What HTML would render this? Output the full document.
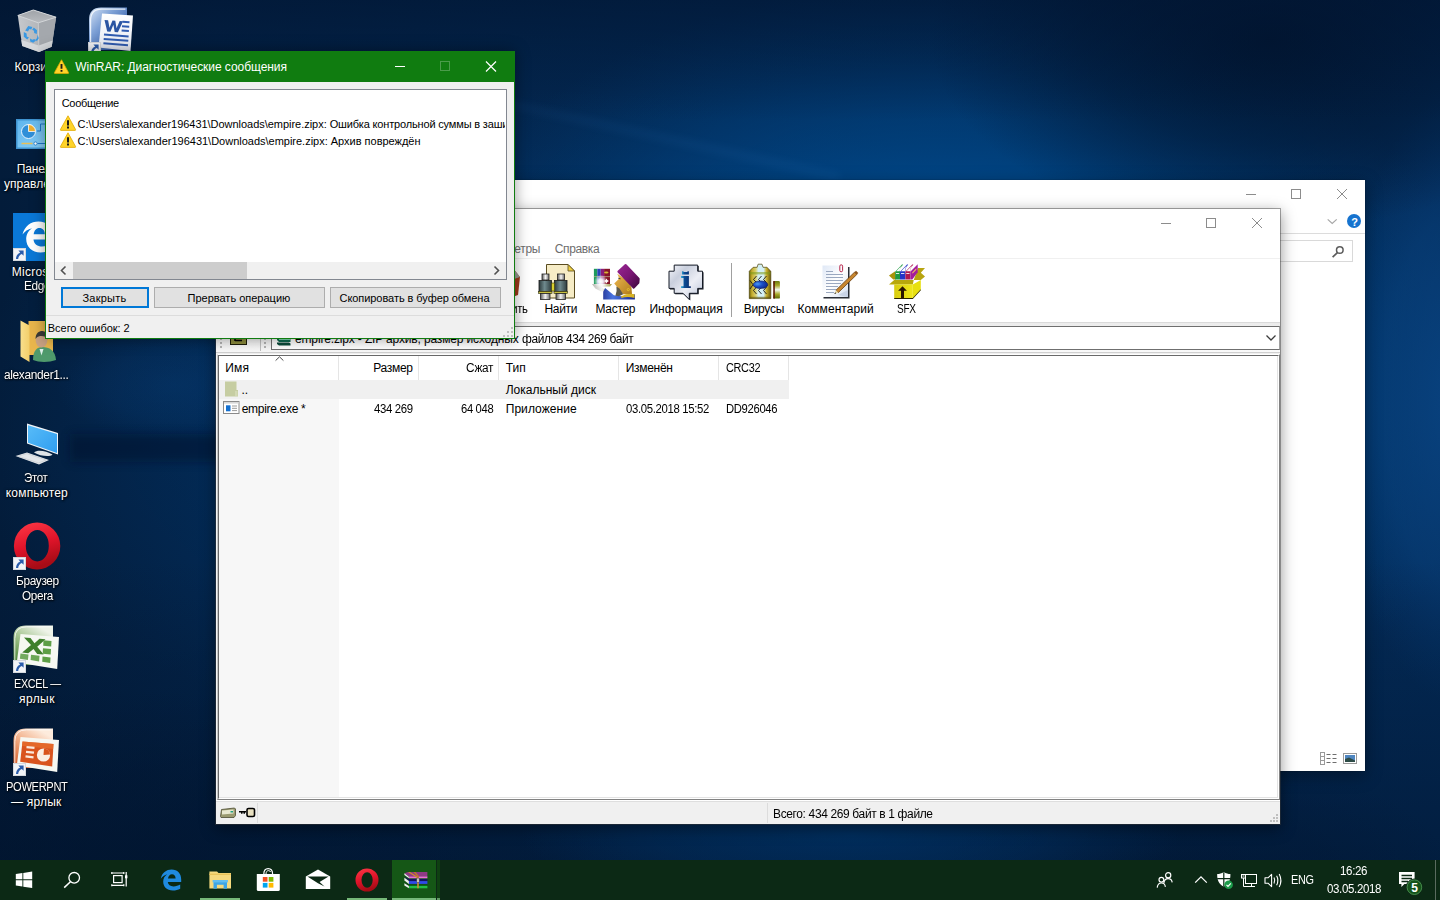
<!DOCTYPE html>
<html lang="ru">
<head>
<meta charset="utf-8">
<title>WinRAR: Диагностические сообщения</title>
<style>
*{box-sizing:border-box;margin:0;padding:0}
html,body{width:1440px;height:900px;overflow:hidden}
body{position:relative;font-family:"Liberation Sans",sans-serif;font-size:12px;color:#000;background:#03224a}
.t{position:absolute;white-space:pre;line-height:16px;height:16px}
svg{position:absolute;overflow:visible}
#wall{overflow:hidden}

</style>
</head>
<body>
<svg id="wall" style="left:0;top:0" width="1440" height="900" viewBox="0 0 1440 900">
<defs>
<linearGradient id="wbase" x1="0" y1="0" x2="1" y2="0">
<stop offset="0" stop-color="#031c3a"/><stop offset=".15" stop-color="#032348"/><stop offset=".5" stop-color="#032852"/><stop offset="1" stop-color="#032a56"/>
</linearGradient>
<radialGradient id="wglow" cx=".5" cy=".5" r=".5">
<stop offset="0" stop-color="#0058a6" stop-opacity="1"/><stop offset=".45" stop-color="#004e94" stop-opacity=".85"/><stop offset=".75" stop-color="#00488a" stop-opacity=".4"/><stop offset="1" stop-color="#00407a" stop-opacity="0"/>
</radialGradient>
<radialGradient id="wglow2" cx=".5" cy=".5" r=".5">
<stop offset="0" stop-color="#0a4686" stop-opacity=".8"/><stop offset=".6" stop-color="#0a4686" stop-opacity=".45"/><stop offset="1" stop-color="#064080" stop-opacity="0"/>
</radialGradient>
<radialGradient id="wglow3" cx=".5" cy=".5" r=".5">
<stop offset="0" stop-color="#003c78" stop-opacity=".5"/><stop offset=".6" stop-color="#003c78" stop-opacity=".25"/><stop offset="1" stop-color="#003c78" stop-opacity="0"/>
</radialGradient>
<radialGradient id="wdark" cx=".5" cy=".5" r=".5">
<stop offset="0" stop-color="#01142e" stop-opacity=".9"/><stop offset=".55" stop-color="#01142e" stop-opacity=".5"/><stop offset="1" stop-color="#01142e" stop-opacity="0"/>
</radialGradient>
<linearGradient id="wtop" x1="0" y1="0" x2="0" y2="1">
<stop offset="0" stop-color="#011430" stop-opacity=".6"/><stop offset="1" stop-color="#011430" stop-opacity="0"/>
</linearGradient>
<linearGradient id="wbot" x1="0" y1="0" x2="0" y2="1">
<stop offset="0" stop-color="#01142e" stop-opacity="0"/><stop offset="1" stop-color="#01142e" stop-opacity=".62"/>
</linearGradient>
<filter id="wblur2" x="-20%" y="-60%" width="140%" height="220%"><feGaussianBlur stdDeviation="5"/></filter>
<filter id="wblur" x="-20%" y="-50%" width="140%" height="200%"><feGaussianBlur stdDeviation="4"/></filter>
</defs>
<rect width="1440" height="900" fill="url(#wbase)"/>
<ellipse cx="560" cy="420" rx="600" ry="330" fill="url(#wglow3)"/>
<ellipse cx="940" cy="390" rx="560" ry="410" fill="url(#wglow)"/>
<ellipse cx="1450" cy="400" rx="110" ry="300" fill="url(#wglow2)"/>
<ellipse cx="1270" cy="40" rx="340" ry="190" fill="url(#wdark)"/>
<rect width="1440" height="120" fill="url(#wtop)"/>
<rect y="560" width="1440" height="340" fill="url(#wbot)"/>
<ellipse cx="120" cy="880" rx="520" ry="190" fill="url(#wdark)" opacity=".75"/>
<ellipse cx="1200" cy="880" rx="260" ry="120" fill="url(#wdark)" opacity=".5"/>
<ellipse cx="850" cy="835" rx="330" ry="70" fill="url(#wglow3)"/>
<ellipse cx="175" cy="385" rx="120" ry="55" fill="url(#wglow2)" opacity=".35"/>
<rect x="70" y="434" width="170" height="28" fill="#010e26" opacity=".42" filter="url(#wblur2)"/>
<path d="M500 100 L840 174 L840 180 L500 104Z" fill="#3a88d0" opacity=".13" filter="url(#wblur)"/>
</svg>
<svg style="left:13px;top:6px" width="48" height="48" viewBox="0 0 48 48">
<defs><linearGradient id="rb1" x1="0" y1="0" x2="1" y2="0"><stop offset="0" stop-color="#c6c9cd"/><stop offset=".55" stop-color="#b3b6ba"/><stop offset="1" stop-color="#a6a9ae"/></linearGradient>
<linearGradient id="rb2" x1="0" y1="0" x2="0" y2="1"><stop offset="0" stop-color="#9fa3a8"/><stop offset="1" stop-color="#b8bbbf"/></linearGradient></defs>
<path d="M4.800 9.500 L20.300 4 L43.100 11.200 L38.700 40.700 L25.900 46 L9.200 40.100 Z" fill="url(#rb1)"/>
<path d="M25.300 16.800 L43.100 11.200 L38.700 40.700 L25.900 46Z" fill="#a4a8ad"/>
<path d="M4.800 9.500 L20.300 4 L43.100 11.200 L25.300 16.800 Z" fill="url(#rb2)" stroke="#d2d5d8" stroke-width="1" stroke-linejoin="round"/>
<path d="M8.300 34 L25.700 39.600 L39.600 34.600 L38.700 40.700 L25.900 46 L9.200 40.100Z" fill="#dcdee1" opacity=".85"/>
<path d="M25.300 16.800 L25.900 46" stroke="#cfd2d5" stroke-width=".8"/>
<g fill="#3a98e2"><path d="M12.200 24.500 l3-4.400 4.200 .8 -1.200 2.600 -1.800-.4 -1.400 2.400z"/><path d="M20.800 21.600 l3.200 2.600 -.2 3.800 -2.600-1 -.2-2.200 -1.800-1z"/><path d="M10.800 26 l2.800 1.400 .2 3.200 2.200 1 -1.800 2 -3.400-2.800z"/><path d="M17 32.400 l.2 3 3 1.400 2.800-2.200 -1.800-1.600 -1.800 .8z"/><path d="M24.600 28.800 l-.6 3.400 -1.600 1.200 1.400 1.800 2-3z"/></g>
</svg>
<span class="t" style="left:14.40px;top:58.5px;font-size:12px;color:#fff;letter-spacing:0.064px;text-shadow:1px 1px 2px rgba(0,0,0,.95),0 0 3px rgba(0,0,0,.8);">Корзина</span>
<svg style="left:87px;top:6px" width="48" height="48" viewBox="0 0 48 48">
<defs><linearGradient id="wd1" x1="0" y1="0" x2="1" y2="1"><stop offset="0" stop-color="#d9e6f6"/><stop offset=".35" stop-color="#7fa2d6"/><stop offset=".8" stop-color="#2a56a5"/></linearGradient>
<linearGradient id="wd2" x1="0" y1="0" x2="0" y2="1"><stop offset="0" stop-color="#ffffff"/><stop offset="1" stop-color="#e3e8f2"/></linearGradient></defs>
<path d="M2 44 L2 14 Q2 1.5 14 1.5 L40 1.5 L40 44Z" fill="url(#wd1)"/>
<path d="M3.6 44 L3.6 14.5 Q3.6 3.2 14.5 3.2 L38.4 3.2" fill="none" stroke="#f4f8fd" stroke-width="1.2" opacity=".9"/>
<path d="M15 7.5 L46 9.5 L43.5 45 L11.5 41.5Z" fill="url(#wd2)"/>
<path d="M17.5 14 l3.6 .2 1.4 7.6 3-7.3 2.8 .2 1.2 7.6 3.2-7.3 3.4 .2 -5.2 11 -3.2-.2 -1.3-7.2 -3 7 -3.2-.2z" fill="#2b55a2"/>
<g stroke="#2f5bb0" stroke-width="2"><path d="M35.5 15.8 L42.5 16.3"/><path d="M35 20.2 L42.2 20.7"/><path d="M34.6 24.6 L41.9 25.1"/><path d="M17 28.6 L41.6 30.4"/><path d="M16.7 33 L41.3 34.8"/><path d="M16.4 37.2 L41 39.2"/></g>
</svg>
<svg style="left:88px;top:42px" width="13" height="13" viewBox="0 0 13 13"><rect width="13" height="13" fill="#f2f4f7"/><rect x=".5" y=".5" width="12" height="12" fill="none" stroke="#d4d8de"/><path d="M5.400 2.600 L10.600 2.600 L10.600 7.800 L8.800 6 C6.600 7 5.400 8.600 5.200 11 L3 11 C3 7.800 4.600 5.600 7.200 4.400Z" fill="#2a5cab"/></svg>
<svg style="left:13px;top:110px" width="48" height="48" viewBox="0 0 48 48">
<defs><linearGradient id="cp1" x1="0" y1="0" x2="1" y2="1"><stop offset="0" stop-color="#5fb6ee"/><stop offset="1" stop-color="#8ed2f8"/></linearGradient></defs>
<rect x="3" y="9" width="42" height="30" fill="#3f93d0"/>
<rect x="4.5" y="10.5" width="39" height="27" fill="url(#cp1)"/>
<circle cx="15.5" cy="21.5" r="7" fill="#2f8fd8" stroke="#eaf6ff" stroke-width="1"/>
<path d="M15.500 21.500 L15.500 14.500 A7 7 0 0 1 22.500 21.500Z" fill="#f0b030" stroke="#fff" stroke-width=".8"/>
<path d="M24 21 h3.500 v-7 h14" fill="none" stroke="#1e78c8" stroke-width="1"/>
<path d="M8.500 33.500 h11" stroke="#e8c058" stroke-width="1.500"/>
<circle cx="22.500" cy="33.500" r="1.600" fill="#fff" stroke="#1e78c8" stroke-width=".8"/>
<path d="M24.500 33.500 h17" stroke="#1e78c8" stroke-width="1"/>
</svg>
<span class="t" style="left:16.70px;top:160.5px;font-size:12px;color:#fff;letter-spacing:-0.134px;text-shadow:1px 1px 2px rgba(0,0,0,.95),0 0 3px rgba(0,0,0,.8);">Панель</span>
<span class="t" style="left:4.00px;top:175.5px;font-size:12px;color:#fff;letter-spacing:0.061px;text-shadow:1px 1px 2px rgba(0,0,0,.95),0 0 3px rgba(0,0,0,.8);">управления</span>
<svg style="left:13px;top:213px" width="48" height="48" viewBox="0 0 48 48">
<rect width="48" height="48" fill="#0a78d7"/>
<path d="M9.5 21.500 C11.500 13 18 8.500 25.500 8.500 C34 8.500 39 14.500 39 22.500 L39 26.500 L20.500 26.500 C20.800 31 24.500 33.500 29 33.500 C32.500 33.500 35.500 32.500 37.800 31 L37.800 36.800 C35 38.600 31.500 39.500 27.500 39.500 C19 39.500 13.200 33.800 13.200 26 C13.200 21.500 15.500 17.600 19 15.200 C15 16 11.500 18.500 9.500 21.500Z M20.700 21.200 L31.800 21.200 C31.800 17.500 29.700 15 26.300 15 C23.300 15 21.200 17.500 20.700 21.200Z" fill="#fff"/>
</svg>
<svg style="left:13px;top:248px" width="13" height="13" viewBox="0 0 13 13"><rect width="13" height="13" fill="#f2f4f7"/><rect x=".5" y=".5" width="12" height="12" fill="none" stroke="#d4d8de"/><path d="M5.400 2.600 L10.600 2.600 L10.600 7.800 L8.800 6 C6.600 7 5.400 8.600 5.200 11 L3 11 C3 7.800 4.600 5.600 7.200 4.400Z" fill="#2a5cab"/></svg>
<span class="t" style="left:11.70px;top:263.5px;font-size:12px;color:#fff;letter-spacing:0.264px;text-shadow:1px 1px 2px rgba(0,0,0,.95),0 0 3px rgba(0,0,0,.8);">Microsoft</span>
<span class="t" style="left:23.90px;top:278.0px;font-size:12px;color:#fff;letter-spacing:-0.350px;transform:scaleX(0.9859);transform-origin:0 0;text-shadow:1px 1px 2px rgba(0,0,0,.95),0 0 3px rgba(0,0,0,.8);">Edge</span>
<svg style="left:13px;top:316px" width="48" height="48" viewBox="0 0 48 48">
<defs><linearGradient id="uf1" x1="0" y1="0" x2="1" y2="0"><stop offset="0" stop-color="#f9df8c"/><stop offset="1" stop-color="#f3cf6a"/></linearGradient></defs>
<path d="M15.500 5 L40 5 L40 39 L15.500 39Z" fill="#e9b64c"/>
<path d="M7.500 4.500 L16.500 9.500 L16.500 46 L7.500 40.500Z" fill="url(#uf1)"/>
<path d="M20 44 C20 34.500 24 31 29.500 31 C36 31 42.500 34.500 43 44 C36 46.500 26 46.500 20 44Z" fill="#4f9a6c"/>
<path d="M26.500 33 L28.500 39.500 L30.500 33Z" fill="#dff0ea"/>
<ellipse cx="28.500" cy="24.500" rx="5.800" ry="7" fill="#c9a283"/>
<path d="M22.500 23 C22.500 16.500 27 14.500 30.500 15.200 C34.500 16 35.500 19.500 34.600 23.500 C33.500 20.500 30 19.500 27 20 C25 20.400 23.500 21.500 22.500 23Z" fill="#3b3a38"/>
</svg>
<span class="t" style="left:4.20px;top:367.0px;font-size:12px;color:#fff;letter-spacing:-0.350px;transform:scaleX(0.9940);transform-origin:0 0;text-shadow:1px 1px 2px rgba(0,0,0,.95),0 0 3px rgba(0,0,0,.8);">alexander1...</span>
<svg style="left:13px;top:419px" width="48" height="48" viewBox="0 0 48 48">
<defs><linearGradient id="pc1" x1="0" y1="0" x2="1" y2="1"><stop offset="0" stop-color="#58bcf8"/><stop offset="1" stop-color="#2f9df0"/></linearGradient></defs>
<path d="M14 4.600 L45 14 L45 35.500 L14 24.600Z" fill="#f1f4f7"/>
<path d="M15 6.200 L44 15 L44 34 L15 23.800Z" fill="url(#pc1)"/>
<path d="M21 33.500 C24 30.500 33 31.500 39.500 35.500 C37 38.500 27 37 21 33.500Z" fill="#dfe3e6"/>
<path d="M2.500 37 L14 33.500 L36 41 L26 45.500Z" fill="#e4e7ea"/>
<path d="M5 37.200 L14 34.600 L33 41 L25.500 44Z" fill="none" stroke="#c3c7cc" stroke-width=".6"/>
</svg>
<span class="t" style="left:24.20px;top:469.5px;font-size:12px;color:#fff;letter-spacing:-0.350px;transform:scaleX(0.9575);transform-origin:0 0;text-shadow:1px 1px 2px rgba(0,0,0,.95),0 0 3px rgba(0,0,0,.8);">Этот</span>
<span class="t" style="left:5.80px;top:484.5px;font-size:12px;color:#fff;letter-spacing:0.186px;text-shadow:1px 1px 2px rgba(0,0,0,.95),0 0 3px rgba(0,0,0,.8);">компьютер</span>
<svg style="left:13px;top:522px" width="48" height="48" viewBox="0 0 48 48">
<defs><linearGradient id="op1" x1="0" y1="0" x2=".3" y2="1"><stop offset="0" stop-color="#ff3a47"/><stop offset=".55" stop-color="#e0142a"/><stop offset="1" stop-color="#a60c16"/></linearGradient></defs>
<path fill-rule="evenodd" d="M24.100 .5 A23.200 23.500 0 1 0 24.100 47.500 A23.200 23.500 0 1 0 24.100 .5Z M24.300 8 A11.500 15.700 0 1 1 24.300 39.400 A11.500 15.700 0 1 1 24.300 8Z" fill="url(#op1)"/>
</svg>
<svg style="left:13px;top:557px" width="13" height="13" viewBox="0 0 13 13"><rect width="13" height="13" fill="#f2f4f7"/><rect x=".5" y=".5" width="12" height="12" fill="none" stroke="#d4d8de"/><path d="M5.400 2.600 L10.600 2.600 L10.600 7.800 L8.800 6 C6.600 7 5.400 8.600 5.200 11 L3 11 C3 7.800 4.600 5.600 7.200 4.400Z" fill="#2a5cab"/></svg>
<span class="t" style="left:15.50px;top:572.5px;font-size:12px;color:#fff;letter-spacing:-0.350px;transform:scaleX(0.9883);transform-origin:0 0;text-shadow:1px 1px 2px rgba(0,0,0,.95),0 0 3px rgba(0,0,0,.8);">Браузер</span>
<span class="t" style="left:21.70px;top:587.5px;font-size:12px;color:#fff;letter-spacing:-0.350px;transform:scaleX(0.9794);transform-origin:0 0;text-shadow:1px 1px 2px rgba(0,0,0,.95),0 0 3px rgba(0,0,0,.8);">Opera</span>
<svg style="left:13px;top:625px" width="48" height="48" viewBox="0 0 48 48">
<defs><linearGradient id="xla" x1="0" y1="1" x2=".6" y2="0"><stop offset="0" stop-color="#3c7a28"/><stop offset=".55" stop-color="#9cbf86"/><stop offset="1" stop-color="#eef3e8"/></linearGradient></defs>
<path d="M.5 40 L.5 13 Q.5 .5 13 .5 L40 .5 L40 40Z" fill="url(#xla)"/>
<path d="M1.800 38 L1.800 13.500 Q1.800 1.800 13.500 1.800 L38.600 1.800" fill="none" stroke="#fff" stroke-width="1" opacity=".8"/>
<path d="M7.500 9 L46 12 L44.200 44 L3.800 37.400Z" fill="#f6f8f2"/>
<g fill="#5d9e46"><path d="M30.500 15.300 l8 .7 -.3 5.500 -8-.8z"/><path d="M30 23.300 l8 .8 -.3 5.500 -8-.9z"/><path d="M29.500 31.400 l8 1 -.3 5.500 -8-1.200z"/><path d="M18 29.800 l8.500 1 -.4 5.600 -8.500-1.300z" opacity=".9"/><path d="M7.500 28.600 l8 1 -.600 5.500 -8-1.300z" opacity=".85"/></g>
<path d="M11 12.500 l6.500 .5 4 5.200 5-4.500 6 .5 -8.300 7.600 6.500 7.800 -6.500-.6 -3.700-5 -5.300 4.200 -6-.6 8.800-7.500z" fill="#3f7f2c"/>
</svg>
<svg style="left:13px;top:660px" width="13" height="13" viewBox="0 0 13 13"><rect width="13" height="13" fill="#f2f4f7"/><rect x=".5" y=".5" width="12" height="12" fill="none" stroke="#d4d8de"/><path d="M5.400 2.600 L10.600 2.600 L10.600 7.800 L8.800 6 C6.600 7 5.400 8.600 5.200 11 L3 11 C3 7.800 4.600 5.600 7.200 4.400Z" fill="#2a5cab"/></svg>
<span class="t" style="left:13.90px;top:675.5px;font-size:12px;color:#fff;letter-spacing:-0.350px;transform:scaleX(0.9012);transform-origin:0 0;text-shadow:1px 1px 2px rgba(0,0,0,.95),0 0 3px rgba(0,0,0,.8);">EXCEL —</span>
<span class="t" style="left:19.00px;top:691.0px;font-size:12px;color:#fff;letter-spacing:0.440px;text-shadow:1px 1px 2px rgba(0,0,0,.95),0 0 3px rgba(0,0,0,.8);">ярлык</span>
<svg style="left:13px;top:728px" width="48" height="48" viewBox="0 0 48 48">
<defs><linearGradient id="ppa" x1="0" y1="1" x2=".6" y2="0"><stop offset="0" stop-color="#d3521c"/><stop offset=".55" stop-color="#f0a67c"/><stop offset="1" stop-color="#fdebdc"/></linearGradient></defs>
<path d="M.5 40 L.5 13 Q.5 .5 13 .5 L40 .5 L40 40Z" fill="url(#ppa)"/>
<path d="M1.800 38 L1.800 13.500 Q1.800 1.800 13.500 1.800 L38.600 1.800" fill="none" stroke="#fff" stroke-width="1" opacity=".8"/>
<path d="M7.500 9 L46 12 L44.200 44 L3.800 37.400Z" fill="#f6f8f2"/>
<path d="M9.500 13.500 L40.500 16 L39.200 38.500 L7.200 33.800Z" fill="#d9541e"/>
<path d="M9.500 13.500 L40.500 16 L40.200 21 L9 18Z" fill="#e8702e" opacity=".7"/>
<g stroke="#fbe9dc" stroke-width="2.200"><path d="M13.500 19.200 L21.500 19.900"/><path d="M13 23.800 L21 24.600"/><path d="M12.500 28.400 L20.500 29.300"/></g>
<circle cx="30.500" cy="27" r="6.600" fill="#fbeee4"/>
<path d="M30.500 27 L31 20.400 A6.600 6.600 0 0 1 37.100 26.500Z" fill="#d9541e"/>
</svg>
<svg style="left:13px;top:763px" width="13" height="13" viewBox="0 0 13 13"><rect width="13" height="13" fill="#f2f4f7"/><rect x=".5" y=".5" width="12" height="12" fill="none" stroke="#d4d8de"/><path d="M5.400 2.600 L10.600 2.600 L10.600 7.800 L8.800 6 C6.600 7 5.400 8.600 5.200 11 L3 11 C3 7.800 4.600 5.600 7.200 4.400Z" fill="#2a5cab"/></svg>
<span class="t" style="left:5.60px;top:778.5px;font-size:12px;color:#fff;letter-spacing:-0.350px;transform:scaleX(0.9253);transform-origin:0 0;text-shadow:1px 1px 2px rgba(0,0,0,.95),0 0 3px rgba(0,0,0,.8);">POWERPNT</span>
<span class="t" style="left:10.90px;top:794.0px;font-size:12px;color:#fff;letter-spacing:0.236px;text-shadow:1px 1px 2px rgba(0,0,0,.95),0 0 3px rgba(0,0,0,.8);">— ярлык</span>
<div id="explorer" style="position:absolute;left:400px;top:180px;width:965px;height:591px;background:#fff;box-shadow:0 0 1px rgba(0,0,0,.5),0 4px 16px rgba(0,0,0,.35)"></div>
<svg style="left:1240px;top:184px" width="120" height="20" viewBox="0 0 120 20">
<path d="M6 10.500 h10" stroke="#8c8c8c" stroke-width="1" fill="none"/>
<rect x="51.500" y="5.500" width="9" height="9" stroke="#8c8c8c" stroke-width="1" fill="none"/>
<path d="M97 5 l10 10 M107 5 l-10 10" stroke="#8c8c8c" stroke-width="1" fill="none"/></svg>
<svg style="left:1326px;top:213px" width="38" height="16" viewBox="0 0 38 16">
<path d="M1.700 6.400 L6.200 10.400 L10.700 6.400" fill="none" stroke="#a6a6a6" stroke-width="1.200"/>
<circle cx="28" cy="8" r="7" fill="#1673cf"/></svg>
<span class="t" style="left:1351.20px;top:213.5px;font-size:11px;color:#fff;font-weight:700;">?</span>
<div style="position:absolute;left:1270px;top:233px;width:95px;height:1px;background:#dcdcdc"></div>
<div style="position:absolute;left:1180px;top:240px;width:173px;height:22px;background:#fff;border:1px solid #d9d9d9"></div>
<svg style="left:1331px;top:245px" width="14" height="14" viewBox="0 0 14 14">
<circle cx="8.800" cy="5" r="3.300" fill="none" stroke="#5c5c5c" stroke-width="1.500"/><path d="M6.400 7.600 L1.600 12.200" stroke="#5c5c5c" stroke-width="1.700"/></svg>
<svg style="left:1320px;top:752px" width="38" height="14" viewBox="0 0 38 14">
<g fill="none" stroke="#9a9a9a" stroke-width="1"><rect x=".5" y=".5" width="4" height="4"/><rect x=".5" y="4.500" width="4" height="4"/><rect x=".5" y="8.500" width="4" height="4"/></g>
<g stroke="#6e6e6e" stroke-width="1"><path d="M6.500 2.500 h4 M12.500 2.500 h4 M6.500 6.500 h4 M12.500 6.500 h4 M6.500 10.500 h4 M12.500 10.500 h4"/></g>
<rect x="23.500" y="1.500" width="13" height="10" fill="#fff" stroke="#9a9a9a"/><rect x="25" y="3" width="10" height="7" fill="#4f86c0"/><path d="M25 10 L25 7 L29 5.500 L35 8.500 L35 10Z" fill="#2d4b46"/></svg>
<div id="winrar" style="position:absolute;left:215px;top:208px;width:1066px;height:617px;background:#fff;background-clip:padding-box;border:1px solid rgba(60,60,60,.45);box-shadow:0 4px 14px rgba(0,0,0,.4)"></div>
<svg style="left:1155px;top:213px" width="120" height="20" viewBox="0 0 120 20">
<path d="M6 10.500 h10" stroke="#8c8c8c" stroke-width="1" fill="none"/>
<rect x="51.500" y="5.500" width="9" height="9" stroke="#8c8c8c" stroke-width="1" fill="none"/>
<path d="M97 5 l10 10 M107 5 l-10 10" stroke="#8c8c8c" stroke-width="1" fill="none"/></svg>
<span class="t" style="left:246.00px;top:216.0px;font-size:12px;color:#999;">empire.zipx - WinRAR</span>
<span class="t" style="left:223.00px;top:241.0px;font-size:12px;color:#6d6d6d;">Файл</span>
<span class="t" style="left:262.00px;top:241.0px;font-size:12px;color:#6d6d6d;">Команды</span>
<span class="t" style="left:326.00px;top:241.0px;font-size:12px;color:#6d6d6d;">Операции</span>
<span class="t" style="left:394.00px;top:241.0px;font-size:12px;color:#6d6d6d;">Избранное</span>
<span class="t" style="left:479.00px;top:241.0px;font-size:12px;color:#6d6d6d;letter-spacing:-0.309px;">Параметры</span>
<span class="t" style="left:554.70px;top:241.0px;font-size:12px;color:#6d6d6d;letter-spacing:-0.346px;">Справка</span>
<div style="position:absolute;left:216px;top:258px;width:1064px;height:1px;background:#f0f0f0"></div>
<div style="position:absolute;left:731px;top:263px;width:1px;height:54px;background:#a0a0a0"></div>
<span class="t" style="left:487.00px;top:301.0px;font-size:12px;color:#000;letter-spacing:-0.350px;transform:scaleX(0.9376);transform-origin:0 0;">Удалить</span>
<span class="t" style="left:544.50px;top:301.0px;font-size:12px;color:#000;letter-spacing:-0.312px;">Найти</span>
<span class="t" style="left:595.50px;top:301.0px;font-size:12px;color:#000;letter-spacing:-0.303px;">Мастер</span>
<span class="t" style="left:649.50px;top:301.0px;font-size:12px;color:#000;letter-spacing:-0.032px;">Информация</span>
<span class="t" style="left:743.70px;top:301.0px;font-size:12px;color:#000;letter-spacing:-0.190px;">Вирусы</span>
<span class="t" style="left:797.50px;top:301.0px;font-size:12px;color:#000;letter-spacing:0.061px;">Комментарий</span>
<span class="t" style="left:897.00px;top:301.0px;font-size:12px;color:#000;letter-spacing:-0.350px;transform:scaleX(0.8391);transform-origin:0 0;">SFX</span>
<svg style="left:488px;top:265px" width="34" height="36" viewBox="0 0 34 36">
<path d="M6 8 L24 2 L32 12 L30 30 L16 35 L8 28Z" fill="#a03a1a"/><path d="M6 8 L24 2 L32 12 L14 18Z" fill="#9a9a96"/></svg>
<svg style="left:538px;top:264px" width="38" height="36" viewBox="0 0 38 36">
<defs><linearGradient id="fb1" x1="0" y1="0" x2="1" y2="0"><stop offset="0" stop-color="#2e3c3e"/><stop offset=".45" stop-color="#6f8a8e"/><stop offset="1" stop-color="#2e3c3e"/></linearGradient>
<linearGradient id="fb2" x1="0" y1="0" x2="1" y2="0"><stop offset="0" stop-color="#5a5a5a"/><stop offset=".5" stop-color="#f4f4f4"/><stop offset="1" stop-color="#6a6a6a"/></linearGradient></defs>
<path d="M8.500 .5 L30 .5 L36.500 7 L36.500 34 L8.500 34Z" fill="#f6ecc6" stroke="#5a4c20" stroke-width="1"/>
<path d="M30 .5 L30 7 L36.500 7Z" fill="#f0d040" stroke="#5a4c20" stroke-width=".8"/>
<g><rect x="4" y="10" width="7" height="6" fill="url(#fb2)" stroke="#222" stroke-width=".8"/>
<rect x="1" y="16.500" width="12.500" height="11" fill="url(#fb1)" stroke="#1a1a1a" stroke-width=".8"/>
<rect x=".5" y="27.500" width="13.500" height="2" fill="#c8c040" stroke="#2a2a10" stroke-width=".6"/>
<rect x="2.500" y="29.500" width="9.500" height="6" fill="url(#fb2)" stroke="#222" stroke-width=".8"/></g>
<g transform="translate(15.500,0)"><rect x="4" y="10" width="7" height="6" fill="url(#fb2)" stroke="#222" stroke-width=".8"/>
<rect x="1" y="16.500" width="12.500" height="11" fill="url(#fb1)" stroke="#1a1a1a" stroke-width=".8"/>
<rect x=".5" y="27.500" width="13.500" height="2" fill="#c8c040" stroke="#2a2a10" stroke-width=".6"/>
<rect x="2.500" y="29.500" width="9.500" height="6" fill="url(#fb2)" stroke="#222" stroke-width=".8"/></g>
<rect x="13.500" y="19" width="3" height="8" fill="#d8d030" stroke="#3a3a10" stroke-width=".6"/>
</svg>
<svg style="left:592px;top:264px" width="48" height="36" viewBox="0 0 48 36">
<defs><radialGradient id="wz1" cx=".5" cy=".5" r=".5"><stop offset="0" stop-color="#fff"/><stop offset=".35" stop-color="#fff" stop-opacity=".9"/><stop offset="1" stop-color="#fff" stop-opacity="0"/></radialGradient>
<linearGradient id="wz2" x1="0" y1="0" x2="1" y2="1"><stop offset="0" stop-color="#962490"/><stop offset=".5" stop-color="#7a1674"/><stop offset="1" stop-color="#420840"/></linearGradient>
<linearGradient id="wz3" x1="0" y1="0" x2="1" y2="1"><stop offset="0" stop-color="#eeb850"/><stop offset="1" stop-color="#b07c1c"/></linearGradient>
<linearGradient id="wz4" x1="0" y1="0" x2="1" y2="0"><stop offset="0" stop-color="#b8b8b0"/><stop offset=".5" stop-color="#f4f4f4"/><stop offset="1" stop-color="#a09840"/></linearGradient>
<linearGradient id="wz5" x1="0" y1="0" x2="1" y2="0"><stop offset="0" stop-color="#2a3ea0"/><stop offset=".3" stop-color="#4a74e0"/><stop offset="1" stop-color="#1a2a90"/></linearGradient></defs>
<rect x="1.900" y="4.800" width="3.400" height="15.200" fill="#1e9a5c"/><rect x="5.300" y="4.800" width="3.400" height="15.200" fill="#2a44b8"/><rect x="8.700" y="4.800" width="3.400" height="15.200" fill="#8a1c78"/><rect x="12.100" y="4.800" width="5.900" height="15.200" fill="#861428"/>
<rect x="1.900" y="12.100" width="16.100" height="1" fill="#c0b090" opacity=".7"/>
<ellipse cx="14.300" cy="8.500" rx="2.200" ry="1" fill="#d8b838"/>
<path d="M0 20 L20 20 L18 22.400 L9.500 22.800 L13.500 27 L9 27.500 L3.300 24.400 Z" fill="url(#wz4)"/>
<circle cx="8.700" cy="17.500" r="6.800" fill="url(#wz1)"/>
<path d="M14.500 14.500 l.9 1.600 1.600 .9 -1.600 .9 -.9 1.600 -.9-1.600 -1.600-.9 1.600-.9z" fill="#fff"/>
<path d="M13.100 23.900 L21.900 31.200 L31 32.500 L42.900 30.200 L42.900 35.600 L11.200 35.600 L11.200 27.800Z" fill="url(#wz5)"/>
<path d="M25.300 9.700 L27.300 14.600 L22.200 19.500 L24.800 22.400 L25.500 25 L31.200 30.200 L40 30.200 L39.500 23.400 L36 17Z" fill="url(#wz3)"/>
<path d="M26.200 14.200 L28.600 14.800" stroke="#3a3a30" stroke-width=".9"/>
<path d="M24.400 22.400 L27.500 24.500 L31.200 30.200 L27 32.200 L23.400 31.700 L24.600 27Z" fill="#5c5a4c"/>
<path d="M29.300 32.200 Q36 29 42.500 30.200 L42.500 34.100 Q36 32 29.300 34Z" fill="#d8b424"/>
<circle cx="36.300" cy="25.600" r="1.100" fill="none" stroke="#e8c830" stroke-width=".8"/>
<path d="M26.600 7.700 L33.700 1.200 L46.500 14.800 L46.200 18.700 L41.700 23.500Z" fill="url(#wz2)" stroke="url(#wz2)" stroke-width="2.400" stroke-linejoin="round"/>
</svg>
<svg style="left:668px;top:264px" width="37" height="37" viewBox="0 0 37 37">
<defs><linearGradient id="in1" x1="0" y1="0" x2="1" y2="1"><stop offset="0" stop-color="#f6f7fb"/><stop offset=".3" stop-color="#c9cfdd"/><stop offset=".6" stop-color="#eceef5"/><stop offset="1" stop-color="#b9c2d6"/></linearGradient>
<linearGradient id="in2" x1="0" y1="0" x2="1" y2="0"><stop offset="0" stop-color="#38b4e0"/><stop offset=".35" stop-color="#0c4c94"/><stop offset="1" stop-color="#0a2c6c"/></linearGradient></defs>
<path d="M6.200 1.100 H29.700 V7.200 H34.500 V24.400 H29.700 V29.300 H21.300 V35.600 L15 29.300 H6.200 V24.400 H1 V7.200 H6.200Z" fill="#0c1018" transform="translate(1,1)"/>
<path d="M6.200 1.100 H29.700 V7.200 H34.500 V24.400 H29.700 V29.300 H21.300 V35.600 L15 29.300 H6.200 V24.400 H1 V7.200 H6.200Z" fill="url(#in1)" stroke="#141a26" stroke-width="1"/>
<path d="M14 7.200 H15.500 V8 H19.400 V7.200 H20.900 V10.400 H14Z M13 12.100 H20.900 V22.200 H22.800 V23.900 H13 V22.200 H15.500 V14.100 H13Z" fill="url(#in2)"/>
</svg>
<svg style="left:748px;top:263px" width="34" height="37" viewBox="0 0 34 37">
<defs><linearGradient id="vr1" x1="0" y1="0" x2="1" y2="0"><stop offset="0" stop-color="#6e6208"/><stop offset=".12" stop-color="#c4ac2c"/><stop offset=".3" stop-color="#d8d070"/><stop offset=".42" stop-color="#d4f0f6"/><stop offset=".66" stop-color="#d4f0f6"/><stop offset=".8" stop-color="#c8b030"/><stop offset="1" stop-color="#6a5a08"/></linearGradient>
<linearGradient id="vr2" x1="0" y1="0" x2="0" y2="1"><stop offset="0" stop-color="#6a7a10"/><stop offset=".25" stop-color="#a8a828"/><stop offset=".5" stop-color="#f4fcf4"/><stop offset=".75" stop-color="#a8a828"/><stop offset="1" stop-color="#5a6a08"/></linearGradient>
<radialGradient id="vr3" cx=".3" cy=".4" r=".8"><stop offset="0" stop-color="#4a9cf4"/><stop offset=".4" stop-color="#1c50c8"/><stop offset="1" stop-color="#0c2080"/></radialGradient></defs>
<path d="M1.300 35.600 L1.300 8.200 L5.200 4.300 L9.100 4.300 L10.100 1.200 L14 1.200 L15 4.300 L18.900 4.300 L22.800 8.200 L22.800 35.600Z" fill="url(#vr1)" stroke="#4a4008" stroke-width=".7"/>
<rect x="1.600" y="9" width="20.900" height="2.400" fill="#7a9a18" opacity=".55"/>
<rect x="1.600" y="33.800" width="20.900" height="1.600" fill="#5a5008" opacity=".6"/>
<g stroke="#181818" stroke-width=".9" fill="none"><path d="M8.500 13 L5.500 16.500 L8.500 19.500 M13.500 13 L10.500 16.500 L13.500 19.500 M18.500 13 L15.500 16.500 L18.500 19.500"/><path d="M8.500 31 L5.500 27.500 L8.500 24 M13.500 31 L10.500 27.500 L13.500 24 M18.500 31 L15.500 27.500 L18.500 24"/><path d="M2 17.500 L5 21.700 L2 26"/></g>
<ellipse cx="12.500" cy="21.700" rx="7.300" ry="3.800" fill="url(#vr3)" stroke="#0a1860" stroke-width=".6"/>
<rect x="25.300" y="18" width="6.600" height="17.600" rx="1.200" fill="url(#vr2)"/>
<rect x="25.300" y="18" width="1.500" height="17.600" fill="#5a1408"/>
</svg>
<svg style="left:821px;top:264px" width="38" height="36" viewBox="0 0 38 36">
<defs><linearGradient id="cm1" x1="0" y1="0" x2="1" y2="1"><stop offset="0" stop-color="#dfe8f6"/><stop offset=".5" stop-color="#ffffff"/><stop offset="1" stop-color="#d4dff0"/></linearGradient></defs>
<path d="M27 3 L28.500 3 L28.500 34.500 L2.500 34.500 L2.500 33 L27 33Z" fill="#2a2e36"/>
<path d="M1.500 1.500 L27 1.500 L27 33 L1.500 33Z" fill="url(#cm1)"/>
<g stroke="#9aa8c0" stroke-width="1"><path d="M5 7.500 H12"/><path d="M5 10.500 H22 M5 13.500 H22 M5 16.500 H22 M5 19.500 H20 M5 22.500 H17 M5 25.500 H15 M5 28.500 H13"/></g>
<rect x="18.800" y=".8" width="2.800" height="7" rx="1.400" fill="none" stroke="#b8284c" stroke-width="1"/>
<path d="M15 26.200 L33.500 8.200 L35.800 10.500 L17.300 28.600Z" fill="#c8862e" stroke="#6a3c0c" stroke-width=".8"/>
<path d="M33.500 8.200 L35 6.700 L37.300 9 L35.800 10.500Z" fill="#8a5218"/><path d="M15 26.200 L13.300 30 L17.300 28.600Z" fill="#e8d8a0"/><path d="M14.200 28.200 L13.300 30 L15.200 29.400Z" fill="#2a2a2a"/>
<path d="M17 31 L27 33 L27 26Z" fill="#c4d0e4" opacity=".8"/>
</svg>
<svg style="left:889px;top:264px" width="37" height="36" viewBox="0 0 37 36">
<defs><linearGradient id="sx1" x1="0" y1="0" x2="1" y2="0"><stop offset="0" stop-color="#d8cc10"/><stop offset="1" stop-color="#f0e818"/></linearGradient></defs>
<path d="M0 11.400 L6.200 7.200 L7.100 15.600 L4.200 15.600Z" fill="#a89408"/>
<path d="M29.100 4.100 L36 4.100 L31.800 8.700 L36 12.600 L31.800 16 L24.700 16Z" fill="#b8a410"/>
<path d="M6.200 7.700 L13 .6 L14.200 .6 L11 4.500 L11 15.600 L6.200 15.600Z" fill="#1e9a40"/><path d="M7.200 7.200 L13 1.200 L11 4.500 L10.800 7.200Z" fill="#fff"/>
<path d="M11 7.700 L18 .6 L19.200 .6 L16.400 4.500 L16.400 15.600 L11 15.600Z" fill="#2434c8"/><path d="M12 7.200 L18 1.200 L16.200 4.500 L16 7.200Z" fill="#fff"/>
<path d="M16.400 7.700 L23.200 .6 L24.400 .6 L21.300 4.500 L21.300 15.600 L16.400 15.600Z" fill="#b01850"/><path d="M17.400 7.200 L23.200 1.200 L21.400 4.500 L21.200 7.200Z" fill="#fff"/>
<path d="M21.300 7.700 L28.700 .2 L28.700 8.200 L23.300 15.600 L21.300 15.600Z" fill="#a41c9c"/>
<path d="M23.500 8.300 L27.300 4.300 L27.300 5.800 L23.500 9.800Z" fill="#f0c060"/>
<path d="M7 9.500 h3.200 M12 9.500 h3.400 M17.300 9.500 h3.200" stroke="#fff" stroke-width="1" opacity=".85"/>
<path d="M0 20.400 L5.200 16 L24.700 16 L23.800 20.400Z" fill="#b8a80c"/>
<path d="M5.200 20.400 L23.800 20.400 L23.800 34.600 L5.200 34.600Z" fill="url(#sx1)"/>
<path d="M23.800 20.400 L31.800 16 L31.800 25.800 L23.800 34.600Z" fill="#e8e010"/>
<path d="M5.200 34.100 L23.800 34.100 L31.800 25.300 L31.800 26.300 L23.800 35.100 L5.200 35.100Z" fill="#2a2400"/>
<path d="M13.500 22.200 L17.900 26.800 L15 26.800 L15 34.400 L12 34.400 L12 26.800 L9.100 26.800Z" fill="#2a1600"/>
</svg>
<div style="position:absolute;left:216px;top:322px;width:1064px;height:1px;background:#dadada"></div>
<div style="position:absolute;left:216px;top:323px;width:1064px;height:30px;background:linear-gradient(#ececec,#fafafa)"></div>
<div style="position:absolute;left:216px;top:352px;width:1064px;height:1px;background:#d0d0d0"></div>
<div style="position:absolute;left:216px;top:353px;width:1064px;height:2px;background:#f0f0f0"></div>
<div style="position:absolute;left:260px;top:326px;width:1px;height:25px;background:#c0c0c0"></div>
<svg style="left:220px;top:330px" width="2" height="20"><rect x="0" y="0" width="2" height="2" fill="#b4b4b4"/><rect x="0" y="4" width="2" height="2" fill="#b4b4b4"/><rect x="0" y="8" width="2" height="2" fill="#b4b4b4"/><rect x="0" y="12" width="2" height="2" fill="#b4b4b4"/><rect x="0" y="16" width="2" height="2" fill="#b4b4b4"/></svg>
<svg style="left:264px;top:330px" width="2" height="20"><rect x="0" y="0" width="2" height="2" fill="#b4b4b4"/><rect x="0" y="4" width="2" height="2" fill="#b4b4b4"/><rect x="0" y="8" width="2" height="2" fill="#b4b4b4"/><rect x="0" y="12" width="2" height="2" fill="#b4b4b4"/><rect x="0" y="16" width="2" height="2" fill="#b4b4b4"/></svg>
<svg style="left:230px;top:329px" width="17" height="16" viewBox="0 0 17 16">
<rect x=".5" y=".5" width="16" height="15" fill="#8c8c3c" stroke="#1c1c08"/><rect x="2" y="2" width="13" height="5" fill="#b8b86a"/>
<path d="M5 12 L5 6 M3 8 L5 5.500 L7 8 M5 11.500 L12 11.500" stroke="#000" stroke-width="1.600" fill="none"/></svg>
<div style="position:absolute;left:271px;top:326px;width:1009px;height:24px;background:#fff;border:1px solid #6f6f6f;border-right-color:#a0a0a0"></div>
<svg style="left:275px;top:330px" width="16" height="16" viewBox="0 0 16 16">
<path d="M2 1 L14 1 L15.500 3 L15.500 6 L4 6 L2 4Z" fill="#0b5a44"/><path d="M4 3.500 H15.500" stroke="#7fd8b0" stroke-width="1"/>
<path d="M2 7 L14 7 L15.500 9 L15.500 12 L4 12 L2 10Z" fill="#0d6a50"/><path d="M4 9.500 H15.500" stroke="#7fd8b0" stroke-width="1"/>
<path d="M2 12.500 L14 12.500 L15.500 13.500 L15.500 15.500 L4 15.500 L2 14Z" fill="#0a4a3a"/>
<path d="M.5 2 L4 6 M.5 5 L4 9" stroke="#222" stroke-width="1"/></svg>
<span class="t" style="left:295.00px;top:331.0px;font-size:12px;color:#000;letter-spacing:-0.153px;">empire.zipx - ZIP архив, размер исходных </span><span class="t" style="left:521.70px;top:331.0px;font-size:12px;color:#000;letter-spacing:-0.350px;transform:scaleX(0.9924);transform-origin:0 0;">файлов 434 269 байт</span>
<svg style="left:1265px;top:334px" width="12" height="8" viewBox="0 0 12 8"><path d="M1.500 1.500 L6 6 L10.500 1.500" fill="none" stroke="#3c3c3c" stroke-width="1.300"/></svg>
<div style="position:absolute;left:216px;top:354px;width:1064px;height:446px;background:#f4f4f4"></div>
<div style="position:absolute;left:217px;top:354px;width:1063px;height:446px;background:#fff;border:1px solid #828282;border-top-color:#fff;border-left-color:#c8c8c8"></div>
<div style="position:absolute;left:218px;top:355px;width:1061px;height:444px;background:#fff;border:1px solid #696969;border-right-color:#fff;border-bottom-color:#fff"></div>
<div style="position:absolute;left:219px;top:356px;width:1059px;height:442px;background:#fff;border-right:1px solid #e3e3e3;border-bottom:1px solid #e3e3e3"></div>
<div style="position:absolute;left:219px;top:356px;width:120px;height:441px;background:#f7f7f7"></div>
<div style="position:absolute;left:219px;top:356px;width:570px;height:24px;background:#fff"></div>
<div style="position:absolute;left:219px;top:380px;width:570px;height:19px;background:#f0f0f0"></div>
<div style="position:absolute;left:338px;top:356px;width:1px;height:24px;background:#e5e5e5"></div>
<div style="position:absolute;left:418px;top:356px;width:1px;height:24px;background:#e5e5e5"></div>
<div style="position:absolute;left:498px;top:356px;width:1px;height:24px;background:#e5e5e5"></div>
<div style="position:absolute;left:618px;top:356px;width:1px;height:24px;background:#e5e5e5"></div>
<div style="position:absolute;left:718px;top:356px;width:1px;height:24px;background:#e5e5e5"></div>
<div style="position:absolute;left:788px;top:356px;width:1px;height:24px;background:#e5e5e5"></div>
<svg style="left:275px;top:356px" width="9" height="5" viewBox="0 0 9 5"><path d="M.6 4.600 L4.500 .8 L8.400 4.600" fill="none" stroke="#4a4a4a" stroke-width="1"/></svg>
<span class="t" style="left:225.30px;top:359.5px;font-size:12px;color:#000;letter-spacing:0.162px;">Имя</span>
<span class="t" style="left:373.30px;top:359.5px;font-size:12px;color:#000;letter-spacing:-0.310px;">Размер</span>
<span class="t" style="left:466.00px;top:359.5px;font-size:12px;color:#000;letter-spacing:-0.350px;transform:scaleX(0.9811);transform-origin:0 0;">Сжат</span>
<span class="t" style="left:505.70px;top:359.5px;font-size:12px;color:#000;letter-spacing:-0.008px;">Тип</span>
<span class="t" style="left:625.70px;top:359.5px;font-size:12px;color:#000;letter-spacing:-0.281px;">Изменён</span>
<span class="t" style="left:725.50px;top:359.5px;font-size:12px;color:#000;letter-spacing:-0.350px;transform:scaleX(0.9089);transform-origin:0 0;">CRC32</span>
<svg style="left:225px;top:381px" width="14" height="16" viewBox="0 0 14 16">
<path d="M0 .5 L11.500 .5 L11.500 9 L13 9 L13 15.500 L0 15.500Z" fill="#c6cda2"/><path d="M10 10 L12.500 10 L12.500 15 L10 15Z" fill="#d3d9b4"/></svg>
<svg style="left:223px;top:401px" width="17" height="14" viewBox="0 0 17 14">
<rect x=".5" y=".5" width="15.500" height="12" fill="#fff" stroke="#8a8a8a"/><rect x="1" y="1" width="14.500" height="1.600" fill="#d8d8d8"/>
<rect x="3" y="4.300" width="4.500" height="6" fill="#1470d0"/><path d="M9 5 h5 M9 7.300 h5 M9 9.600 h5" stroke="#9a9a9a" stroke-width="1"/></svg>
<span class="t" style="left:241.50px;top:381.5px;font-size:12px;color:#000;">..</span>
<span class="t" style="left:505.70px;top:381.5px;font-size:12px;color:#000;letter-spacing:0.005px;">Локальный диск</span>
<span class="t" style="left:241.70px;top:400.5px;font-size:12px;color:#000;letter-spacing:-0.298px;">empire.exe *</span>
<span class="t" style="left:373.80px;top:400.5px;font-size:12px;color:#000;letter-spacing:-0.350px;transform:scaleX(0.9494);transform-origin:0 0;">434 269</span>
<span class="t" style="left:460.70px;top:400.5px;font-size:12px;color:#000;letter-spacing:-0.350px;transform:scaleX(0.9327);transform-origin:0 0;">64 048</span>
<span class="t" style="left:505.70px;top:400.5px;font-size:12px;color:#000;letter-spacing:0.068px;">Приложение</span>
<span class="t" style="left:625.70px;top:400.5px;font-size:12px;color:#000;letter-spacing:-0.350px;transform:scaleX(0.9447);transform-origin:0 0;">03.05.2018 15:52</span>
<span class="t" style="left:725.50px;top:400.5px;font-size:12px;color:#000;letter-spacing:-0.350px;transform:scaleX(0.9376);transform-origin:0 0;">DD926046</span>
<div style="position:absolute;left:216px;top:800px;width:1064px;height:24px;background:#f0f0f0;border-top:1px solid #fff"></div>
<div style="position:absolute;left:216px;top:801px;width:1064px;height:1px;background:#dedede"></div>
<div style="position:absolute;left:257px;top:803px;width:1px;height:20px;background:#dcdcdc"></div>
<div style="position:absolute;left:767px;top:803px;width:1px;height:20px;background:#dcdcdc"></div>
<svg style="left:220px;top:807px" width="36" height="12" viewBox="0 0 36 12">
<path d="M1.500 2.500 L14.500 1 L15.500 2 L15.500 8.500 L14 10.500 L1 10.500 L.5 9.500Z" fill="#9a9a70" stroke="#4a4a30" stroke-width=".8"/>
<path d="M2 3.600 L13.500 2.600 L13.500 6.600 L2 7.400Z" fill="#e8e8d0"/><rect x="10.500" y="4" width="2.500" height="1.500" fill="#20a080"/>
<path d="M19 4 h7 v1.500 h-1 v1.200 h-1.500 v-1.200 h-1 v1.200 h-1.500 v-1.200 h-2Z" fill="#000"/>
<rect x="27" y="1.500" width="7.500" height="8" rx="1.500" fill="#e8e0c0" stroke="#000" stroke-width="1.600"/></svg>
<span class="t" style="left:773.00px;top:806.0px;font-size:12px;color:#000;letter-spacing:-0.350px;transform:scaleX(0.9969);transform-origin:0 0;">Всего: 434 269 байт в 1 файле</span>
<svg style="left:1270px;top:814px" width="8" height="8" viewBox="0 0 8 8"><rect x="6" y="0" width="2" height="2" fill="#bfbfbf"/><rect x="3" y="3" width="2" height="2" fill="#bfbfbf"/><rect x="6" y="3" width="2" height="2" fill="#bfbfbf"/><rect x="0" y="6" width="2" height="2" fill="#bfbfbf"/><rect x="3" y="6" width="2" height="2" fill="#bfbfbf"/><rect x="6" y="6" width="2" height="2" fill="#bfbfbf"/></svg>
<div id="dlg" style="position:absolute;left:45px;top:51px;width:470px;height:288px;background:#f0f0f0;border:1px solid #107c10;box-shadow:0 0 14px rgba(0,0,0,.4)"></div>
<div style="position:absolute;left:45px;top:51px;width:470px;height:31px;background:#107c10"></div>
<svg style="left:54px;top:59px" width="15" height="15" viewBox="0 0 16 16"><path d="M8 0.8 L15.6 14.6 Q15.9 15.4 15 15.4 L1 15.4 Q0.1 15.4 0.4 14.6 Z" fill="#ffd42a" stroke="#e0a800" stroke-width=".8"/><path d="M7 5.2h2v5.2h-2z M7 11.6h2v2h-2z" fill="#1a1a1a"/></svg>
<span class="t" style="left:75.30px;top:59.0px;font-size:12px;color:#fff;letter-spacing:-0.058px;">WinRAR: Диагностические сообщения</span>
<svg style="left:380px;top:52px" width="134" height="30" viewBox="0 0 134 30"><path d="M15 14.5h10" stroke="#fff" stroke-width="1" fill="none"/><rect x="60.5" y="9.5" width="9" height="9" stroke="#4a9c4a" stroke-width="1" fill="none"/><path d="M106 9.5l10 10M116 9.5l-10 10" stroke="#fff" stroke-width="1.2" fill="none"/></svg>
<div style="position:absolute;left:54px;top:89px;width:453px;height:191px;background:#fff;border:1px solid #828790"></div>
<span class="t" style="left:61.70px;top:95.0px;font-size:11px;color:#000;letter-spacing:-0.297px;">Сообщение</span>
<svg style="left:60px;top:115px" width="16" height="16" viewBox="0 0 16 16"><path d="M8 0.8 L15.6 14.6 Q15.9 15.4 15 15.4 L1 15.4 Q0.1 15.4 0.4 14.6 Z" fill="#ffd42a" stroke="#e0a800" stroke-width=".8"/><path d="M7 5.2h2v5.2h-2z M7 11.6h2v2h-2z" fill="#1a1a1a"/></svg>
<svg style="left:60px;top:132px" width="16" height="16" viewBox="0 0 16 16"><path d="M8 0.8 L15.6 14.6 Q15.9 15.4 15 15.4 L1 15.4 Q0.1 15.4 0.4 14.6 Z" fill="#ffd42a" stroke="#e0a800" stroke-width=".8"/><path d="M7 5.2h2v5.2h-2z M7 11.6h2v2h-2z" fill="#1a1a1a"/></svg>
<div style="position:absolute;left:55px;top:110px;width:450px;height:40px;overflow:hidden"><span class="t" style="left:22.50px;top:6.0px;font-size:11px;color:#000;letter-spacing:-0.032px;">C:\Users\alexander196431\Downloads\empire.zipx: </span><span class="t" style="left:274.70px;top:6.0px;font-size:11px;color:#000;letter-spacing:-0.166px;">Ошибка контрольной суммы в зашифрованном</span><span class="t" style="left:22.50px;top:23.0px;font-size:11px;color:#000;letter-spacing:-0.010px;">C:\Users\alexander196431\Downloads\empire.zipx: Архив повреждён</span></div>
<div style="position:absolute;left:55px;top:262px;width:451px;height:17px;background:#f0f0f0"></div>
<div style="position:absolute;left:73px;top:262px;width:174px;height:17px;background:#cdcdcd"></div>
<svg style="left:55px;top:262px" width="451" height="17" viewBox="0 0 451 17"><path d="M10.5 4.5L6.5 8.5L10.5 12.5" stroke="#505050" stroke-width="1.6" fill="none"/><path d="M439.5 4.5L443.5 8.5L439.5 12.5" stroke="#505050" stroke-width="1.6" fill="none"/></svg>
<div style="position:absolute;left:61px;top:287px;width:88px;height:21px;background:#e1e1e1;border:2px solid #0078d7"></div>
<div style="position:absolute;left:154px;top:287px;width:171px;height:21px;background:#e1e1e1;border:1px solid #adadad"></div>
<div style="position:absolute;left:330px;top:287px;width:171px;height:21px;background:#e1e1e1;border:1px solid #adadad"></div>
<span class="t" style="left:82.50px;top:290.0px;font-size:11px;color:#000;letter-spacing:0.221px;">Закрыть</span>
<span class="t" style="left:187.50px;top:290.0px;font-size:11px;color:#000;">Прервать операцию</span>
<span class="t" style="left:339.50px;top:290.0px;font-size:11px;color:#000;letter-spacing:-0.059px;">Скопировать в буфер обмена</span>
<div style="position:absolute;left:46px;top:315px;width:468px;height:1px;background:#dcdcdc"></div>
<span class="t" style="left:47.80px;top:320.0px;font-size:11px;color:#000;letter-spacing:-0.040px;">Всего ошибок: 2</span>
<svg style="left:503px;top:327px" width="10" height="10" viewBox="0 0 10 10"><rect x="8" y="0" width="2" height="2" fill="#bfbfbf"/><rect x="4" y="4" width="2" height="2" fill="#bfbfbf"/><rect x="8" y="4" width="2" height="2" fill="#bfbfbf"/><rect x="0" y="8" width="2" height="2" fill="#bfbfbf"/><rect x="4" y="8" width="2" height="2" fill="#bfbfbf"/><rect x="8" y="8" width="2" height="2" fill="#bfbfbf"/></svg>
<div id="taskbar" style="position:absolute;left:0;top:860px;width:1440px;height:40px;background:#0c2915"></div>
<div style="position:absolute;left:392px;top:860px;width:44px;height:40px;background:#155716"></div>
<div style="position:absolute;left:436px;top:860px;width:1px;height:40px;background:#0c2915"></div>
<div style="position:absolute;left:437px;top:860px;width:3px;height:40px;background:#0f4012"></div>
<div style="position:absolute;left:200px;top:898px;width:40px;height:2px;background:#76b979"></div>
<div style="position:absolute;left:347px;top:898px;width:40px;height:2px;background:#76b979"></div>
<div style="position:absolute;left:392px;top:898px;width:44px;height:2px;background:#76b979"></div>
<div style="position:absolute;left:437px;top:898px;width:3px;height:2px;background:#5e9a62"></div>
<svg style="left:15px;top:871px" width="18" height="18" viewBox="0 0 18 18">
<path d="M.8 3 L7.400 2 L7.400 8.300 L.8 8.300Z M8.300 1.900 L17.200 .6 L17.200 8.300 L8.300 8.300Z M.8 9.200 L7.400 9.200 L7.400 15.500 L.8 14.500Z M8.300 9.200 L17.200 9.200 L17.200 17 L8.300 15.700Z" fill="#fff"/></svg>
<svg style="left:62px;top:870px" width="20" height="20" viewBox="0 0 20 20">
<circle cx="12.200" cy="7.800" r="5.300" fill="none" stroke="#fff" stroke-width="1.300"/><path d="M8.400 11.700 L2.200 17.600" stroke="#fff" stroke-width="1.500"/></svg>
<svg style="left:111px;top:871px" width="18" height="18" viewBox="0 0 18 18">
<g fill="none" stroke="#fff" stroke-width="1.200"><rect x="2.600" y="4.600" width="8.500" height="7"/><path d="M.8 1 V3 M.8 2 H12.800 M12.800 1 V3"/><path d="M.8 13.300 V15.300 M.8 14.300 H12.800 M12.800 13.300 V15.300"/><path d="M15.200 1 V15.400"/></g><rect x="14" y="4.300" width="2.400" height="3" fill="#fff"/></svg>
<svg style="left:160px;top:869px" width="22" height="22" viewBox="0 0 22 22">
<path d="M.8 9.800 C1.800 4 6.300 .6 11.600 .6 C17.500 .6 21.200 4.600 21.200 10.500 L21.200 13 L7.800 13 C8 15.800 10.300 17.400 13.500 17.400 C16 17.400 18.300 16.700 20.200 15.600 L20.200 19.800 C18.200 21 15.600 21.600 12.800 21.600 C6.800 21.600 3.200 17.800 3.200 12.600 C3.200 9.400 4.800 6.800 7.200 5.200 C4.600 5.800 2.200 7.600 .8 9.800Z M8 9.400 L15.600 9.400 C15.600 6.900 14.300 5.200 12 5.200 C9.900 5.200 8.400 6.900 8 9.400Z" fill="#1f8ae0"/></svg>
<svg style="left:209px;top:870px" width="23" height="20" viewBox="0 0 23 20">
<path d="M.4 1.400 L8 1.400 L9.500 3 L22 3 L22 18.400 L.4 18.400Z" fill="#f6d97e"/>
<path d="M.4 3.600 L22 3.600 L22 5 L.4 5Z" fill="#e9c35a"/>
<path d="M4.500 18.800 L4.500 11.600 L18 11.600 L18 18.800 L14.600 18.800 L14.600 14.800 L7.900 14.800 L7.900 18.800Z" fill="#3ea5e6"/>
<path d="M3.600 10 L18.900 10 L18.900 12.400 L3.600 12.400Z" fill="#62bdf0"/></svg>
<svg style="left:256px;top:867px" width="25" height="25" viewBox="0 0 25 25">
<path d="M7.800 7.200 C7.800 3.400 9.800 1.600 12.200 1.600 C14.600 1.600 16.600 3.400 16.600 7.200" fill="none" stroke="#fff" stroke-width="1.200"/>
<path d="M10 7.200 C10 4.800 11 3.600 12.600 3.600 C13.600 3.600 14.300 4.200 14.600 5" fill="none" stroke="#fff" stroke-width="1"/>
<path d="M.8 7 L23.800 7 L23.800 22.500 Q23.800 24 22.300 24 L2.300 24 Q.8 24 .8 22.500Z" fill="#fff"/>
<rect x="6.800" y="10" width="4.700" height="4.700" fill="#f25022"/><rect x="12.700" y="10" width="4.700" height="4.700" fill="#7fba00"/><rect x="6.800" y="15.900" width="4.700" height="4.700" fill="#00a4ef"/><rect x="12.700" y="15.900" width="4.700" height="4.700" fill="#ffb900"/></svg>
<svg style="left:305px;top:869px" width="26" height="21" viewBox="0 0 26 21">
<path d="M.8 7.400 L13 .6 L25.200 7.400 L25.200 20 L.8 20Z" fill="#fff"/>
<path d="M2.400 7.600 L23.600 7.600 L14.600 13 L19.500 17.400 L13 14.200Z" fill="#0c2915"/></svg>
<svg style="left:355px;top:868px" width="24" height="24" viewBox="0 0 24 24">
<defs><linearGradient id="op2" x1="0" y1="0" x2=".3" y2="1"><stop offset="0" stop-color="#ff3a47"/><stop offset=".55" stop-color="#e0142a"/><stop offset="1" stop-color="#a60c16"/></linearGradient></defs>
<path fill-rule="evenodd" d="M12 .4 A11.500 11.600 0 1 0 12 23.600 A11.500 11.600 0 1 0 12 .4Z M12.100 4.200 A5.600 7.800 0 1 1 12.100 19.800 A5.600 7.800 0 1 1 12.100 4.200Z" fill="url(#op2)"/></svg>
<svg style="left:403px;top:871px" width="26" height="19" viewBox="0 0 26 19">
<path d="M1.400 2.200 L5 1 L24.400 1 L24.400 5.700 L5.900 5.700Z" fill="#8e3a86"/><path d="M5.900 5.500 H24.400 V7.300 H5.900Z" fill="#ec6cdc"/>
<path d="M1.400 2.200 L5.900 5.700 L5.900 7.300 L1.400 4Z" fill="#f0f0f0"/>
<path d="M1.400 5.400 L5.900 8 L24.400 8 L24.400 10.100 L5.900 10.100Z" fill="#141460"/><path d="M5.900 10.100 H24.400 V12.900 H5.900Z" fill="#3048ec"/>
<path d="M1.400 6.800 L5.900 10.100 L5.900 12.900 L1.400 9.600Z" fill="#f0f0f0"/>
<path d="M1.400 11 L5.900 13.600 L24.400 13.600 L24.400 14.900 L5.900 14.900Z" fill="#0c4a14"/><path d="M5.900 14.800 H24.400 V17.300 H5.900Z" fill="#22c044"/>
<path d="M1.400 12.200 L5.900 14.900 L5.900 17.300 L1.400 14.400Z" fill="#f0f0f0"/>
<path d="M5 1 L7 1 L15.800 6.500 L15.800 17.300 L14.200 17.300 L14.200 7.300Z" fill="#d08a30"/><path d="M10.500 1 L12.500 1 L16.200 5.500 L15 6.400Z" fill="#c07a28"/>
<rect x="13.800" y="7" width="2.400" height="4.600" rx="1" fill="#e8e0d0" stroke="#40404a" stroke-width=".6"/></svg>
<svg style="left:1155px;top:870px" width="20" height="20" viewBox="0 0 20 20">
<g fill="none" stroke="#fff" stroke-width="1.200"><circle cx="13.200" cy="5.200" r="2.600"/><path d="M8.800 13.200 C9.200 9.800 11 8.600 13.200 8.600 C15.400 8.600 16.800 9.800 17.200 12.400"/><circle cx="6.400" cy="9.800" r="2.400"/><path d="M2.200 17.600 C2.600 14.200 4.300 13 6.400 13 C8.500 13 10 14.200 10.400 16.800"/></g></svg>
<svg style="left:1194px;top:875px" width="14" height="9" viewBox="0 0 14 9"><path d="M1.200 7.600 L7 1.800 L12.800 7.600" fill="none" stroke="#fff" stroke-width="1.300"/></svg>
<svg style="left:1216px;top:871px" width="18" height="19" viewBox="0 0 18 19">
<path d="M7.800 1 C5.600 2.400 3.400 3 1.200 3 C1 9 3 13.400 7.800 15.600 C12.600 13.400 14.600 9 14.400 3 C12.200 3 10 2.400 7.800 1Z" fill="#fff"/>
<path d="M7.800 1.200 L7.800 15.400 M1.200 7.600 L14.400 7.600" stroke="#0c2915" stroke-width="1.200"/>
<path d="M7.800 7.600 L14.400 7.600 L14.400 3 C12.200 3 10 2.400 7.800 1Z M1.300 7.600 L7.800 7.600 L7.800 15.600 C4.200 14 2.200 11.400 1.300 7.600Z" fill="#0c2915" opacity=".0"/>
<circle cx="12.600" cy="13.800" r="4.300" fill="#1c9b4a"/><path d="M10.500 13.800 L12 15.300 L14.800 12.400" fill="none" stroke="#fff" stroke-width="1.200"/></svg>
<svg style="left:1240px;top:873px" width="18" height="16" viewBox="0 0 18 16">
<g fill="none" stroke="#fff" stroke-width="1"><rect x="5.500" y="1.500" width="11" height="9"/><path d="M11.500 10.500 V13.500 M8 13.500 H15"/><rect x="1.500" y="1.500" width="4" height="3.500"/><path d="M3.500 5 V13.500 H8"/></g><rect x="2.500" y="2.500" width="2" height="1" fill="#fff"/></svg>
<svg style="left:1264px;top:872px" width="19" height="17" viewBox="0 0 19 17">
<path d="M1 5.800 H4 L7.600 2.400 V14.600 L4 11.200 H1Z" fill="none" stroke="#fff" stroke-width="1.100" stroke-linejoin="round"/>
<path d="M10 5.600 Q11.600 8.500 10 11.400 M12.600 3.800 Q15.200 8.500 12.600 13.200 M15.200 2 Q18.600 8.500 15.200 15" fill="none" stroke="#fff" stroke-width="1.100"/></svg>
<span class="t" style="left:1291.00px;top:872.0px;font-size:12px;color:#fff;letter-spacing:-0.350px;transform:scaleX(0.9085);transform-origin:0 0;">ENG</span>
<span class="t" style="left:1340.00px;top:862.5px;font-size:12px;color:#fff;letter-spacing:-0.350px;transform:scaleX(0.9605);transform-origin:0 0;">16:26</span>
<span class="t" style="left:1327.00px;top:881.0px;font-size:12px;color:#fff;letter-spacing:-0.350px;transform:scaleX(0.9576);transform-origin:0 0;">03.05.2018</span>
<svg style="left:1398px;top:871px" width="26" height="22" viewBox="0 0 26 22">
<path d="M1 1 H16.600 V13 H6.400 L3.400 16 V13 H1Z" fill="#fff"/>
<path d="M3.500 4.500 H14 M3.500 7.500 H14 M3.500 10.500 H10" stroke="#0c2915" stroke-width="1.300"/>
<circle cx="16.400" cy="16.200" r="8.200" fill="#14531a" stroke="#0c2915" stroke-width="1"/>
<circle cx="16.400" cy="16.200" r="7.300" fill="none" stroke="#4a8c50" stroke-width=".9"/></svg>
<span class="t" style="left:1411.20px;top:879.5px;font-size:12px;color:#fff;font-weight:700;">5</span>
<div style="position:absolute;left:1435px;top:860px;width:1px;height:40px;background:#5a6b5f"></div>
</body>
</html>
